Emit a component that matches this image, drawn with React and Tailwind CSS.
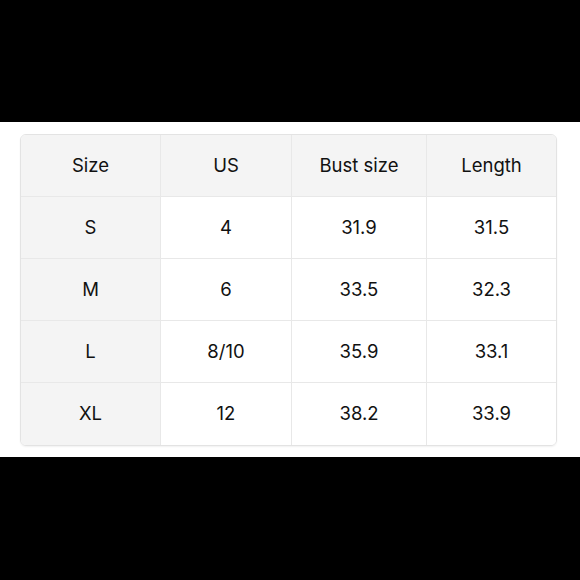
import React from "react";

const header = ["Size", "US", "Bust size", "Length"];

const rows = [
  ["S", "4", "31.9", "31.5"],
  ["M", "6", "33.5", "32.3"],
  ["L", "8/10", "35.9", "33.1"],
  ["XL", "12", "38.2", "33.9"],
];

const Cell = ({ children, gray, last, lastRow }) => (
  <div
    className={`flex h-[62px] items-center justify-center ${gray ? "bg-[#f4f4f4]" : "bg-white"} ${
      last ? "" : "border-r border-[#e8e8e8]"
    } ${lastRow ? "" : "border-b border-[#e8e8e8]"}`}
  >
    {children}
  </div>
);

export default function App() {
  return (
    <div className="flex h-[580px] w-[580px] flex-col bg-black font-['Inter',sans-serif] text-[18.5px] text-[#111]">
      <div className="h-[122px]" />
      <div className="flex h-[335px] flex-col bg-white px-[20px] pt-[12px]">
        <div className="grid w-[537px] grid-cols-[140px_131px_135px_129px] overflow-hidden rounded-[6px] border border-[#e3e3e3] shadow-[0_1px_2px_rgba(0,0,0,0.06)]">
          {header.map((h, i) => (
            <Cell key={h} gray last={i === 3}>
              {h}
            </Cell>
          ))}
          {rows.map((r, ri) =>
            r.map((c, ci) => (
              <Cell key={ri + "-" + ci} gray={ci === 0} last={ci === 3} lastRow={ri === rows.length - 1}>
                {c}
              </Cell>
            ))
          )}
        </div>
      </div>
      <div className="flex-1" />
    </div>
  );
}
